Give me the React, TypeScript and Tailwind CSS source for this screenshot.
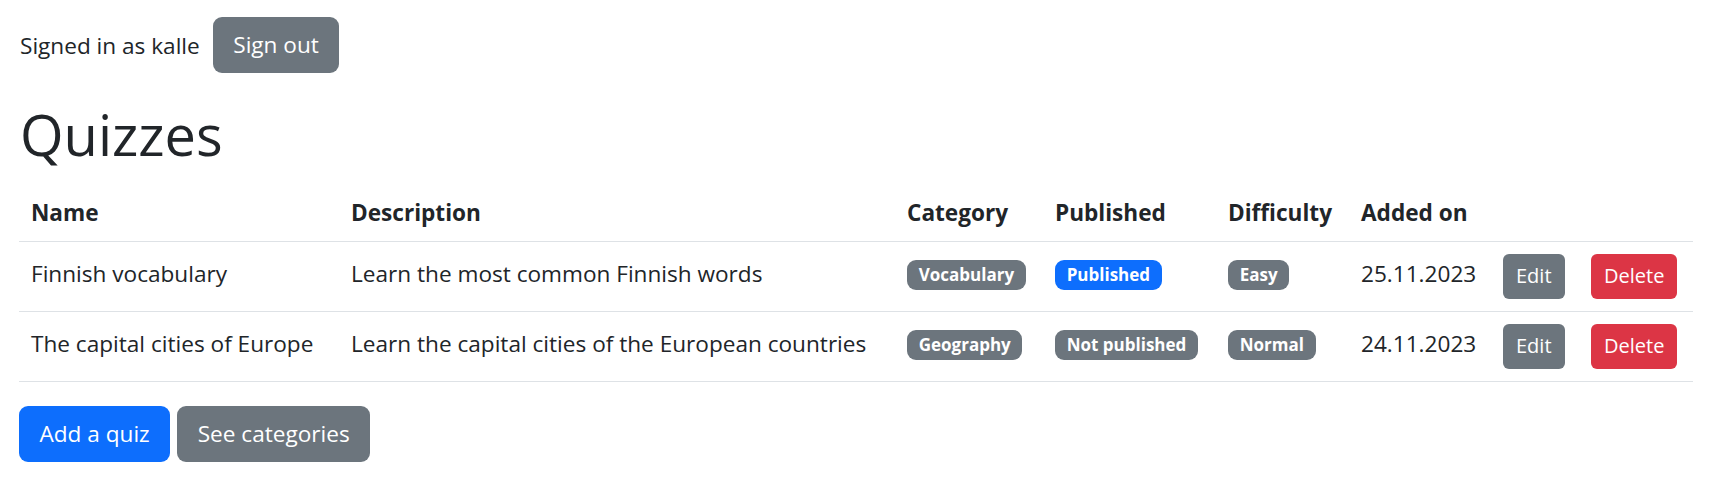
const quizzes = [
  {
    name: 'Finnish vocabulary',
    description: 'Learn the most common Finnish words',
    category: 'Vocabulary',
    published: true,
    difficulty: 'Easy',
    added: '25.11.2023',
  },
  {
    name: 'The capital cities of Europe',
    description: 'Learn the capital cities of the European countries',
    category: 'Geography',
    published: false,
    difficulty: 'Normal',
    added: '24.11.2023',
  },
];

const Badge = ({ children, blue }: { children: string; blue?: boolean }) => (
  <span
    className={`inline-block whitespace-nowrap rounded-[9px] px-[11.7px] py-[6.5px] text-[17px] leading-[17px] font-bold text-white ${
      blue ? 'bg-[#0d6efd]' : 'bg-[#6c757d]'
    }`}
  >
    {children}
  </span>
);

export default function App() {
  return (
    <div className="min-h-screen bg-white pl-[19px] pt-[17px] font-['Open_Sans',sans-serif] text-[22.6px] leading-[36px] text-[#212529]">
      <div className="mb-[24px] flex items-center gap-[13px] pl-[1px]">
        <span className="pt-[1px]">Signed in as kalle</span>
        <button className="h-[56px] rounded-[9px] bg-[#6c757d] px-[20.5px] text-white">Sign out</button>
      </div>

      <h1 className="mb-[12px] h-[71px] pl-[1px] pt-[4px] text-[56px] leading-[67px] font-normal">Quizzes</h1>

      {/* quiz table */}
      <table className="w-[1674px] table-fixed border-collapse">
        <colgroup>
          <col className="w-[320px]" />
          <col className="w-[556px]" />
          <col className="w-[148px]" />
          <col className="w-[173px]" />
          <col className="w-[133px]" />
          <col className="w-[142px]" />
          <col className="w-[88px]" />
          <col className="w-[114px]" />
        </colgroup>
        <thead>
          <tr className="h-[61px] border-b-[1.5px] border-[#dee2e6] text-left">
            <th className="px-[12px] pt-[15px] pb-[9px] align-top font-bold">Name</th>
            <th className="px-[12px] pt-[15px] pb-[9px] align-top font-bold">Description</th>
            <th className="px-[12px] pt-[15px] pb-[9px] align-top font-bold">Category</th>
            <th className="px-[12px] pt-[15px] pb-[9px] align-top font-bold">Published</th>
            <th className="px-[12px] pt-[15px] pb-[9px] align-top font-bold">Difficulty</th>
            <th className="px-[12px] pt-[15px] pb-[9px] align-top font-bold">Added on</th>
            <th className="p-[12px]"></th>
            <th className="p-[12px]"></th>
          </tr>
        </thead>
        <tbody>
          {quizzes.map((q) => (
            <tr key={q.name} className="h-[70px] border-b-[1.5px] border-[#dee2e6]">
              <td className="px-[12px] pt-[14px] pb-[10px] align-top whitespace-nowrap">{q.name}</td>
              <td className="px-[12px] pt-[14px] pb-[10px] align-top whitespace-nowrap">{q.description}</td>
              <td className="px-[12px] pt-[18px] align-top leading-none">
                <Badge>{q.category}</Badge>
              </td>
              <td className="px-[12px] pt-[18px] align-top leading-none">
                <Badge blue={q.published}>{q.published ? 'Published' : 'Not published'}</Badge>
              </td>
              <td className="px-[12px] pt-[18px] align-top leading-none">
                <Badge>{q.difficulty}</Badge>
              </td>
              <td className="px-[12px] pt-[14px] pb-[10px] align-top">{q.added}</td>
              <td className="p-[12px] align-top">
                <button className="h-[45px] rounded-[6px] bg-[#6c757d] px-[13px] text-[20px] text-white">Edit</button>
              </td>
              <td className="p-[12px] align-top">
                <button className="h-[45px] rounded-[6px] bg-[#dc3545] px-[13px] text-[20px] text-white">Delete</button>
              </td>
            </tr>
          ))}
        </tbody>
      </table>

      <div className="mt-[24px] flex gap-[7px]">
        <button className="h-[56px] rounded-[9px] bg-[#0d6efd] px-[20.5px] text-white">Add a quiz</button>
        <button className="h-[56px] rounded-[9px] bg-[#6c757d] px-[20.5px] text-white">See categories</button>
      </div>
    </div>
  );
}
